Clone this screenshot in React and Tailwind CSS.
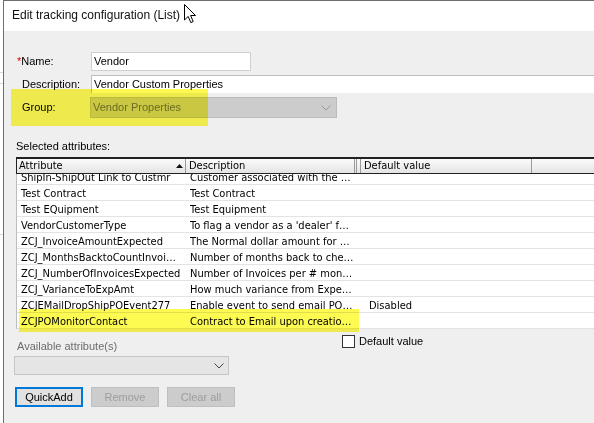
import React from "react";

const rows = [
  { attr: "ShipIn-ShipOut Link to Custmr", desc: "Customer associated with the …", def: "" },
  { attr: "Test Contract", desc: "Test Contract", def: "" },
  { attr: "Test EQuipment", desc: "Test Equipment", def: "" },
  { attr: "VendorCustomerType", desc: "To flag a vendor as a 'dealer' f…", def: "" },
  { attr: "ZCJ_InvoiceAmountExpected", desc: "The Normal dollar amount for …", def: "" },
  { attr: "ZCJ_MonthsBacktoCountInvoi…", desc: "Number of months back to che…", def: "" },
  { attr: "ZCJ_NumberOfInvoicesExpected", desc: "Number of Invoices per # mon…", def: "" },
  { attr: "ZCJ_VarianceToExpAmt", desc: "How much variance from Expe…", def: "" },
  { attr: "ZCJEMailDropShipPOEvent277", desc: "Enable event to send email PO…", def: "Disabled" },
  { attr: "ZCJPOMonitorContact", desc: "Contract to Email upon creatio…", def: "" },
];

const Chevron = ({ className }) => (
  <svg width="10" height="6" viewBox="0 0 10 6" className={className}>
    <path d="M0.5 0.5 L5 5 L9.5 0.5" fill="none" stroke="currentColor" strokeWidth="1" />
  </svg>
);

const Cursor = () => (
  <svg width="14" height="22" viewBox="0 0 14 22" className="absolute left-[183px] top-[3px]">
    <path d="M1.5 1.5 L1.5 17 L5.2 13.4 L7.8 19.6 L10.2 18.6 L7.6 12.5 L12.5 12.5 Z" fill="#fff" stroke="#000" strokeWidth="1" strokeLinejoin="round" />
  </svg>
);

const App = () => {
  return (
    <div className="relative w-[594px] h-[423px] flex overflow-hidden bg-white font-['Liberation_Sans',Arial,sans-serif] text-[11px] text-black">
      {/* window behind, left edge */}
      <div className="w-[3px] h-full bg-white flex flex-col">
        <div className="h-[72px]" />
        <div className="h-px bg-[#d8d8d8]" />
        <div className="h-[10px]" />
        <div className="h-px bg-[#d8d8d8]" />
        <div className="h-[150px]" />
        <div className="h-px bg-[#d8d8d8]" />
      </div>
      <div className="flex-1 flex flex-col border-l border-t border-[#6e6e6e]">
        {/* Title bar */}
        <div className="h-[30px] bg-white flex items-center pl-[8px] pb-[2px]">
          <span className="text-[12px] text-[#111]">Edit tracking configuration (List)</span>
        </div>

        {/* Body */}
        <div className="flex-1 bg-[#f0eff0] flex flex-col pl-[10px] pt-[21px]">
          {/* Name */}
          <div className="flex items-center h-[19px]">
            <div className="w-[74px] ml-[3px] flex items-center">
              <span className="text-[#d00000]">*</span>
              <span>Name:</span>
            </div>
            <div className="w-[160px] h-[19px] bg-white border border-[#cfcfcf] flex items-center pl-[2px]">Vendor</div>
          </div>

          {/* Description */}
          <div className="flex items-center h-[18px] mt-[4px]">
            <div className="w-[69px] ml-[8px]">Description:</div>
            <div className="flex-1 h-[18px] bg-white border-t border-l border-[#bdbdbd] flex items-center pl-[2px]">Vendor Custom Properties</div>
          </div>

          {/* Group */}
          <div className="flex items-center h-[21px] mt-[4px]">
            <div className="w-[68px] ml-[8px]">Group:</div>
            <div className="w-[247px] h-[21px] bg-[#cccccc] border border-[#bcbcbc] flex items-center justify-between pl-[2px] pr-[5px] text-[#6d6d6d]">
              <span>Vendor Properties</span>
              <Chevron className="text-[#9a9a9a]" />
            </div>
          </div>

          {/* Selected attributes */}
          <div className="mt-[21px] ml-[2px] h-[14px] flex items-center">Selected attributes:</div>

          <div className="mt-[4px] ml-[2px] flex flex-col font-['DejaVu_Sans_Condensed','Liberation_Sans',sans-serif] text-[11px]">
            {/* header */}
            <div className="flex h-[17px] border-t-2 border-b border-l border-[#222] bg-gradient-to-b from-[#fbfbfb] to-[#e4e4e4]">
              <div className="w-[169px] flex items-center justify-between pl-[2px] pr-[2px] border-r border-[#9a9a9a]">
                <span>Attribute</span>
                <svg width="7" height="4" viewBox="0 0 7 4"><path d="M0 4 L3.5 0 L7 4 Z" fill="#111" /></svg>
              </div>
              <div className="w-[169px] flex items-center pl-[3px] border-r border-[#9a9a9a]">Description</div>
              <div className="w-[5px] border-r border-l border-[#9a9a9a] ml-px" />
              <div className="w-[171px] flex items-center pl-[3px] border-r border-[#9a9a9a]">Default value</div>
              <div className="flex-1" />
            </div>
            {/* rows */}
            <div className="h-[155px] overflow-hidden bg-white border-l border-[#bdbdbd]">
              <div className="-mt-[5px] flex flex-col">
                {rows.map((r) => (
                  <div key={r.attr} className="flex h-[16px] items-center pt-[4px] border-b border-[#e3e3e3]">
                    <div className="w-[169px] pl-[4px] whitespace-nowrap overflow-hidden">{r.attr}</div>
                    <div className="w-[170px] pl-[4px] whitespace-nowrap overflow-hidden">{r.desc}</div>
                    <div className="pl-[13px] whitespace-nowrap">{r.def}</div>
                  </div>
                ))}
              </div>
            </div>
          </div>

          {/* Available attributes + default value */}
          <div className="flex items-start mt-[6px]">
            <div className="w-[215px] flex flex-col mt-[4px]">
              <div className="h-[14px] flex items-center ml-[3px] text-[#6d6d6d]">Available attribute(s)</div>
              <div className="mt-[3px] h-[19px] bg-[#e5e5e5] border border-[#c6c6c6] flex items-center justify-end pr-[4px]">
                <Chevron className="text-[#444]" />
              </div>
            </div>
            <div className="ml-[113px] flex items-center gap-[4px] -mt-[2px]">
              <div className="w-[13px] h-[13px] bg-white border border-[#333]" />
              <span>Default value</span>
            </div>
          </div>

          {/* Buttons */}
          <div className="flex gap-[8px] mt-[12px] ml-[1px]">
            <button className="w-[68px] h-[20px] bg-[#e1e1e1] border-2 border-[#0078d7] text-black">QuickAdd</button>
            <button className="w-[68px] h-[20px] bg-[#cccccc] border border-[#bfbfbf] text-[#9d9d9d]">Remove</button>
            <button className="w-[68px] h-[20px] bg-[#cccccc] border border-[#bfbfbf] text-[#9d9d9d]">Clear all</button>
          </div>
        </div>
      </div>

      {/* highlighter marks */}
      <div className="absolute left-[11px] top-[89px] w-[197px] h-[37px] bg-[#fdfa52] mix-blend-multiply" />
      <div className="absolute left-[19px] top-[309px] w-[340px] h-[23px] bg-[#fdfa52] mix-blend-multiply" />

      <Cursor />
    </div>
  );
};

export default App;
